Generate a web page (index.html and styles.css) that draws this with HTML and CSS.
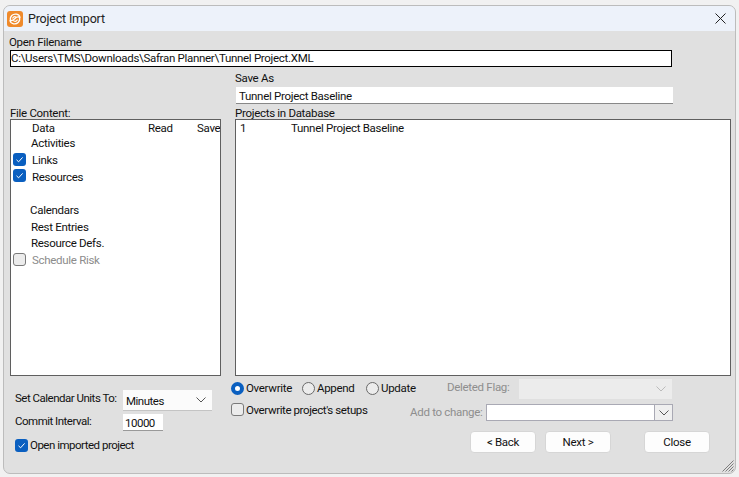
FILE: index.html
```html
<!DOCTYPE html>
<html lang="en">
<head>
    <meta charset="UTF-8">
    <title>Project Import</title>
    <link rel="stylesheet" href="styles.css">
</head>
<body>
    <div class="window">
        <div class="titlebar">
            <svg class="logo" width="16" height="16" viewBox="0 0 16 16">
                <rect width="16" height="16" rx="3" fill="#ef8a2b"/>
                <path d="M3.500 9.500 C2.500 5 6 2.500 9.500 3.200 C11.500 3.600 12.800 5 13 6.500 M13 6.500 C11 5.200 9.500 6 8 7.500 C6.500 9 5 10 3.500 9.500 M12.500 6.500 C13.500 11 10 13.500 6.500 12.800 C4.500 12.400 3.200 11 3 9.500 M5.800 7 C6.500 5.800 8 5.500 9 6 M10.200 9 C9.500 10.200 8 10.500 7 10" fill="none" stroke="#fff" stroke-width="1.300" stroke-linecap="round"/>
            </svg>
            <span class="title">Project Import</span>
            <svg class="close-x" width="11" height="11" viewBox="0 0 11 11">
                <path d="M0.500 0.500 L10.500 10.500 M10.500 0.500 L0.500 10.500" stroke="#222" stroke-width="1" fill="none"/>
            </svg>
        </div>

        <div class="content">
            <div class="label">Open Filename</div>
            <div class="file-input">C:\Users\TMS\Downloads\Safran Planner\Tunnel Project.XML</div>

            <div class="save-as">
                <div class="label">Save As</div>
                <div class="save-input">Tunnel Project Baseline</div>
            </div>

            <div class="lists">
                <div class="list-col">
                    <div class="label">File Content:</div>
                    <div class="listbox content-list">
                        <div class="row head"><span class="name">Data</span><span class="read">Read</span><span class="save">Save</span></div>
                        <div class="row"><span class="name nudge">Activities</span></div>
                        <div class="row"><span class="check on"><svg viewBox="0 0 13 13"><path d="M3.500 6.800 L5.600 8.800 L9.600 4.400"/></svg></span><span class="name">Links</span></div>
                        <div class="row"><span class="check on"><svg viewBox="0 0 13 13"><path d="M3.500 6.800 L5.600 8.800 L9.600 4.400"/></svg></span><span class="name">Resources</span></div>
                        <div class="row"></div>
                        <div class="row"><span class="name nudge2">Calendars</span></div>
                        <div class="row"><span class="name nudge">Rest Entries</span></div>
                        <div class="row"><span class="name nudge">Resource Defs.</span></div>
                        <div class="row off"><span class="check"></span><span class="name">Schedule Risk</span></div>
                    </div>
                </div>
                <div class="list-col">
                    <div class="label">Projects in Database</div>
                    <div class="listbox db-list">
                        <div class="db-row"><span class="db-num">1</span><span>Tunnel Project Baseline</span></div>
                    </div>
                </div>
            </div>

            <div class="bottom">
                <div class="left-opts">
                    <div class="opt-row units">
                        <span class="opt-label">Set Calendar Units To:</span>
                        <div class="select">Minutes<svg class="chev" width="10" height="6" viewBox="0 0 10 6"><path d="M0.500 0.500 L5 5 L9.500 0.500"/></svg></div>
                    </div>
                    <div class="opt-row commit">
                        <span class="opt-label">Commit Interval:</span>
                        <div class="small-input">10000</div>
                    </div>
                    <div class="open-row">
                        <span class="check on"><svg viewBox="0 0 13 13"><path d="M3.500 6.800 L5.600 8.800 L9.600 4.400"/></svg></span>
                        <span>Open imported project</span>
                    </div>
                </div>

                <div class="mid-opts">
                    <div class="radios">
                        <span class="radio-item r1"><span class="radio on"></span>Overwrite</span>
                        <span class="radio-item r2"><span class="radio"></span>Append</span>
                        <span class="radio-item"><span class="radio"></span>Update</span>
                    </div>
                    <div class="setup-row"><span class="check"></span><span>Overwrite project's setups</span></div>
                </div>

                <div class="right-opts">
                    <div class="flag-row">
                        <span class="muted">Deleted Flag:</span>
                        <div class="flag-select"><svg class="chev light" width="10" height="6" viewBox="0 0 10 6"><path d="M0.500 0.500 L5 5 L9.500 0.500"/></svg></div>
                    </div>
                    <div class="change-row">
                        <span class="muted">Add to change:</span>
                        <div class="combo"><span class="combo-btn"><svg class="chev" width="10" height="6" viewBox="0 0 10 6"><path d="M0.500 0.500 L5 5 L9.500 0.500"/></svg></span></div>
                    </div>
                    <div class="buttons">
                        <button class="btn">&lt; Back</button>
                        <button class="btn">Next &gt;</button>
                        <button class="btn close-btn">Close</button>
                    </div>
                </div>
            </div>

            <svg class="grip" width="13" height="13" viewBox="0 0 13 13">
                <path d="M12.500 1.500 L1.500 12.500 M12.500 4.500 L4.500 12.500 M12.500 7.500 L7.500 12.500 M12.500 10.500 L10.500 12.500" stroke="#7d7d7d" stroke-width="1" fill="none"/>
            </svg>
        </div>
    </div>
</body>
</html>
```

FILE: styles.css
```css
body {
    margin: 0;
    width: 739px;
    height: 477px;
    overflow: hidden;
    background-color: #f1f1f1;
    font-family: Roboto, sans-serif;
    font-size: 11.5px;
    letter-spacing: -0.3px;
    line-height: 14px;
    color: #111;
    white-space: nowrap;
}

.window {
    margin: 5px 3px 0 3px;
    width: 733px;
    height: 469px;
    box-sizing: border-box;
    border: 1px solid #bcbcbc;
    border-radius: 7px;
    overflow: hidden;
    display: flex;
    flex-direction: column;
    background-color: #e0e0e0;
}

.titlebar {
    flex: none;
    height: 25px;
    display: flex;
    align-items: center;
    padding: 0 9px 0 3px;
    background-color: #edf2fa;
}

.logo {
    margin-top: 1px;
}

.title {
    margin-left: 5px;
    font-size: 12.500px;
    letter-spacing: -0.2px;
    color: #222;
    flex: 1;
}

/* everything below the title bar */
.content {
    flex: 1;
    position: relative;
    padding: 4px 3px 0 6px;
}

.label {
    height: 14px;
    margin-left: -1px;
}

.file-input {
    margin-top: 1px;
    width: 662px;
    height: 17px;
    box-sizing: border-box;
    border: 1px solid #000;
    background-color: #fff;
    line-height: 14px;
}

.save-as {
    margin: 4px 0 0 226px;
}

.save-input {
    margin: 2px 0 0 0;
    width: 437px;
    height: 17px;
    box-sizing: border-box;
    background-color: #fff;
    border-bottom: 1px solid #888;
    padding: 2px 0 0 3px;
}

.lists {
    margin-top: 2px;
    display: flex;
    gap: 14px;
}

.list-col .label {
    height: 13px;
    margin-left: 0;
}

.list-col:first-child {
    width: 211px;
}

.list-col:last-child {
    width: 496px;
}

.listbox {
    height: 257px;
    box-sizing: border-box;
    border: 1px solid #5f5f5f;
    background-color: #fff;
    overflow: hidden;
}

.row {
    position: relative;
    height: 16.700px;
    display: flex;
    align-items: center;
}

.row .check {
    position: absolute;
    left: 2px;
    top: 1px;
}

.row .name {
    margin-left: 21px;
}

.row .nudge {
    margin-left: 20px;
}

.row .nudge2 {
    margin-left: 19px;
}

.row .read {
    position: absolute;
    left: 137px;
}

.row .save {
    position: absolute;
    left: 186px;
}

.row.off .name {
    color: #8c8c8c;
}

.head {
    height: 15px;
}

.db-row {
    display: flex;
    padding: 1px 0 0 4px;
}

.db-num {
    width: 51px;
}

.check {
    display: inline-block;
    flex: none;
    width: 13px;
    height: 13px;
    box-sizing: border-box;
    border: 1px solid #7a7a7a;
    border-radius: 3px;
    background-color: #ececec;
}

.check.on {
    border: none;
    background-color: #0a5fc0;
}

.check svg {
    display: block;
    width: 13px;
    height: 13px;
}

.check svg path {
    fill: none;
    stroke: #fff;
    stroke-width: 1;
}

.bottom {
    margin-top: 3px;
    display: flex;
    position: relative;
}

.left-opts {
    width: 215px;
    flex: none;
    padding: 11px 0 0 5px;
    box-sizing: border-box;
    letter-spacing: -0.5px;
}

.opt-row {
    display: flex;
}

.opt-label {
    width: 108px;
    flex: none;
}

.units .opt-label {
    padding-top: 1px;
}

.select {
    width: 89px;
    height: 21px;
    box-sizing: border-box;
    background-color: #fbfbfb;
    border-bottom: 1px solid #c4c4c4;
    padding: 4px 0 0 3px;
    position: relative;
}

.chev {
    position: absolute;
    right: 6px;
    top: 7px;
    fill: none;
    stroke: #555;
    stroke-width: 1;
}

.chev.light {
    stroke: #bbb;
}

.commit {
    margin-top: 3px;
}

.small-input {
    width: 40px;
    height: 17px;
    box-sizing: border-box;
    background-color: #fff;
    border-bottom: 1px solid #999;
    padding: 2px 0 0 2px;
}

.open-row {
    margin-top: 7px;
    display: flex;
    gap: 2px;
    align-items: center;
}

.mid-opts {
    width: 176px;
    padding-top: 1px;
    flex: none;
    margin-left: 6px;
}

.radios {
    display: flex;
    height: 16px;
    align-items: center;
}

.radio-item {
    display: flex;
    flex: none;
    align-items: center;
    gap: 2px;
}

.r1 {
    width: 71px;
}

.r2 {
    width: 64px;
}

.radio {
    width: 13px;
    height: 13px;
    box-sizing: border-box;
    border: 1px solid #6a6a6a;
    border-radius: 50%;
    background-color: #ececec;
}

.radio.on {
    border: 4px solid #0a5fc0;
    background-color: #fff;
}

.setup-row {
    margin-top: 7px;
    display: flex;
    gap: 2px;
    align-items: flex-start;
    letter-spacing: -0.4px;
}

.right-opts {
    flex: 1;
    min-width: 0;
}

.muted {
    color: #8e8e8e;
}

.flag-row {
    display: flex;
    margin-left: 40px;
    gap: 7px;
}

.flag-row .muted {
    width: 65px;
    padding-top: 1px;
}

.flag-select {
    width: 153px;
    height: 20px;
    background-color: #ececec;
    position: relative;
}

.change-row {
    display: flex;
    margin: 5px 0 0 3px;
}

.change-row .muted {
    width: 76px;
    flex: none;
    padding-top: 1px;
}

.combo {
    width: 187px;
    height: 17px;
    flex: none;
    box-sizing: border-box;
    border: 1px solid #a9a9b4;
    background-color: #fff;
    position: relative;
}

.combo-btn {
    position: absolute;
    right: 0;
    top: 0;
    width: 17px;
    height: 15px;
    background-color: #efefef;
    border-left: 1px solid #a9a9b4;
}

.combo-btn .chev {
    right: 3px;
    top: 5px;
}

.buttons {
    margin: 10px 0 0 63px;
    display: flex;
    gap: 9px;
}

.btn {
    width: 66px;
    height: 22px;
    flex: none;
    padding: 0;
    border: 1px solid #d6d6d6;
    border-radius: 4px;
    background-color: #fdfdfd;
    font-family: inherit;
    font-size: 11.500px;
    letter-spacing: -0.3px;
    color: #111;
}

.close-btn {
    margin-left: 24px;
}

.grip {
    position: absolute;
    right: 1px;
    bottom: 1px;
}
```
